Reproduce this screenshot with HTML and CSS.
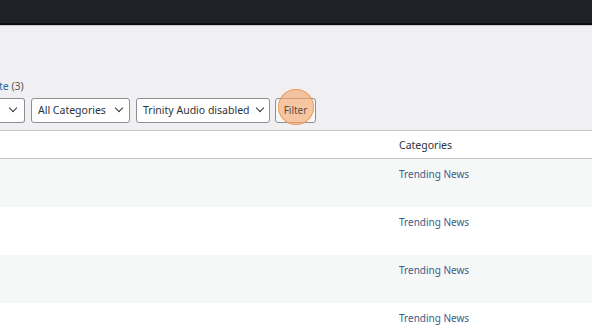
FILE: index.html
```html
<!DOCTYPE html>
<html>
<head>
<meta charset="utf-8">
<link rel="stylesheet" href="styles.css">
</head>
<body>
<div class="adminbar"></div>
<div class="wrap">
  <div class="subsub"><a href="#">te</a> <span class="count">(3)</span></div>
  <div class="filters">
    <div class="select cut"><span class="chev"></span></div>
    <div class="select cats"><span>All Categories</span><span class="chev"></span></div>
    <div class="select trin"><span>Trinity Audio disabled</span><span class="chev"></span></div>
    <div class="btnwrap">
      <span class="hl"></span>
      <button class="btn"><span class="btn-label">Filter</span></button>
    </div>
  </div>
  <table class="list">
    <thead>
      <tr><th class="c-main"></th><th class="c-cat">Categories</th></tr>
    </thead>
    <tbody>
      <tr class="alt"><td class="c-main"></td><td class="c-cat"><a href="#">Trending News</a></td></tr>
      <tr><td class="c-main"></td><td class="c-cat"><a href="#">Trending News</a></td></tr>
      <tr class="alt"><td class="c-main"></td><td class="c-cat"><a href="#">Trending News</a></td></tr>
      <tr><td class="c-main"></td><td class="c-cat"><a href="#">Trending News</a></td></tr>
    </tbody>
  </table>
</div>
</body>
</html>
```
FILE: styles.css
```css
html, body { margin: 0; padding: 0; }
body {
  background: #f0eff1;
  font-family: "Noto Sans", "Open Sans", sans-serif;
  font-size: 10.5px;
  color: #2c3338;
  width: 592px;
  height: 334px;
  overflow: hidden;
}
.adminbar {
  height: 23px;
  background: #1f2129;
  border-bottom: 2px solid #0b0c0f;
  box-shadow: 0 1px 0 #c9c9cc;
}
.wrap { padding-top: 52px; }
.subsub {
  height: 18px;
  line-height: 18px;
  color: #50575e;
  margin-left: -1px;
}
.subsub a { color: #2f6aa0; text-decoration: none; }
.count { color: #50575e; }
.filters {
  display: flex;
  align-items: center;
  gap: 6px;
  margin-top: 2px;
  height: 26px;
}
.select {
  box-sizing: border-box;
  height: 25px;
  border: 1px solid #8c8f94;
  border-radius: 3px;
  background: #fff;
  display: flex;
  align-items: center;
  justify-content: space-between;
  padding: 0 7px 0 6px;
  color: #2c3338;
  font-size: 10.5px;
}
.select.cut { width: 26px; margin-left: -1px; border-left: none; border-radius: 0 3px 3px 0; justify-content: flex-end; padding-right: 8px; }
.select.cats { width: 99px; }
.select.trin { width: 134px; padding-right: 6px; }
.chev {
  width: 5px; height: 5px;
  border-right: 1.3px solid #2c3338;
  border-bottom: 1.3px solid #2c3338;
  transform: translateY(-2px) rotate(45deg);
  flex: none;
  margin-left: 4px;
}
.btnwrap { position: relative; margin-left: -1px; }
.btn {
  position: relative;
  box-sizing: border-box;
  height: 25px;
  width: 41px;
  border: 1px solid #8c8f94;
  border-radius: 3px;
  background: #f6f7f7;
  color: #5e4c40;
  font-family: inherit;
  font-size: 10px;
  padding: 0;
  display: block;
}
.btn-label { position: relative; z-index: 2; }
.hl {
  position: absolute;
  z-index: 1;
  left: 3px; top: -9px;
  width: 36px; height: 36px;
  border-radius: 50%;
  background: rgba(246, 168, 110, 0.62);
  border: 1px solid rgba(238, 150, 80, 0.9);
  box-sizing: border-box;
  pointer-events: none;
}
.list {
  margin-top: 7px;
  width: 100%;
  border-collapse: collapse;
  border-top: 1px solid #c3c4c7;
}
.list thead tr { background: #fff; height: 28px; }
.list th {
  font-weight: normal;
  text-align: left;
  border-bottom: 1px solid #c3c4c7;
  padding: 0;
  font-size: 10.5px;
  color: #2c3338;
}
.c-main { width: 399px; padding: 0; }
.c-cat { padding: 0; }
.list tbody tr { height: 48px; background: #fff; }
.list tbody tr.alt { background: #f6f7f7; }
.list td { vertical-align: top; padding: 0; }
.list td.c-cat { padding-top: 8px; }
.list td a { color: #3a6189; text-decoration: none; font-size: 10px; }
```
